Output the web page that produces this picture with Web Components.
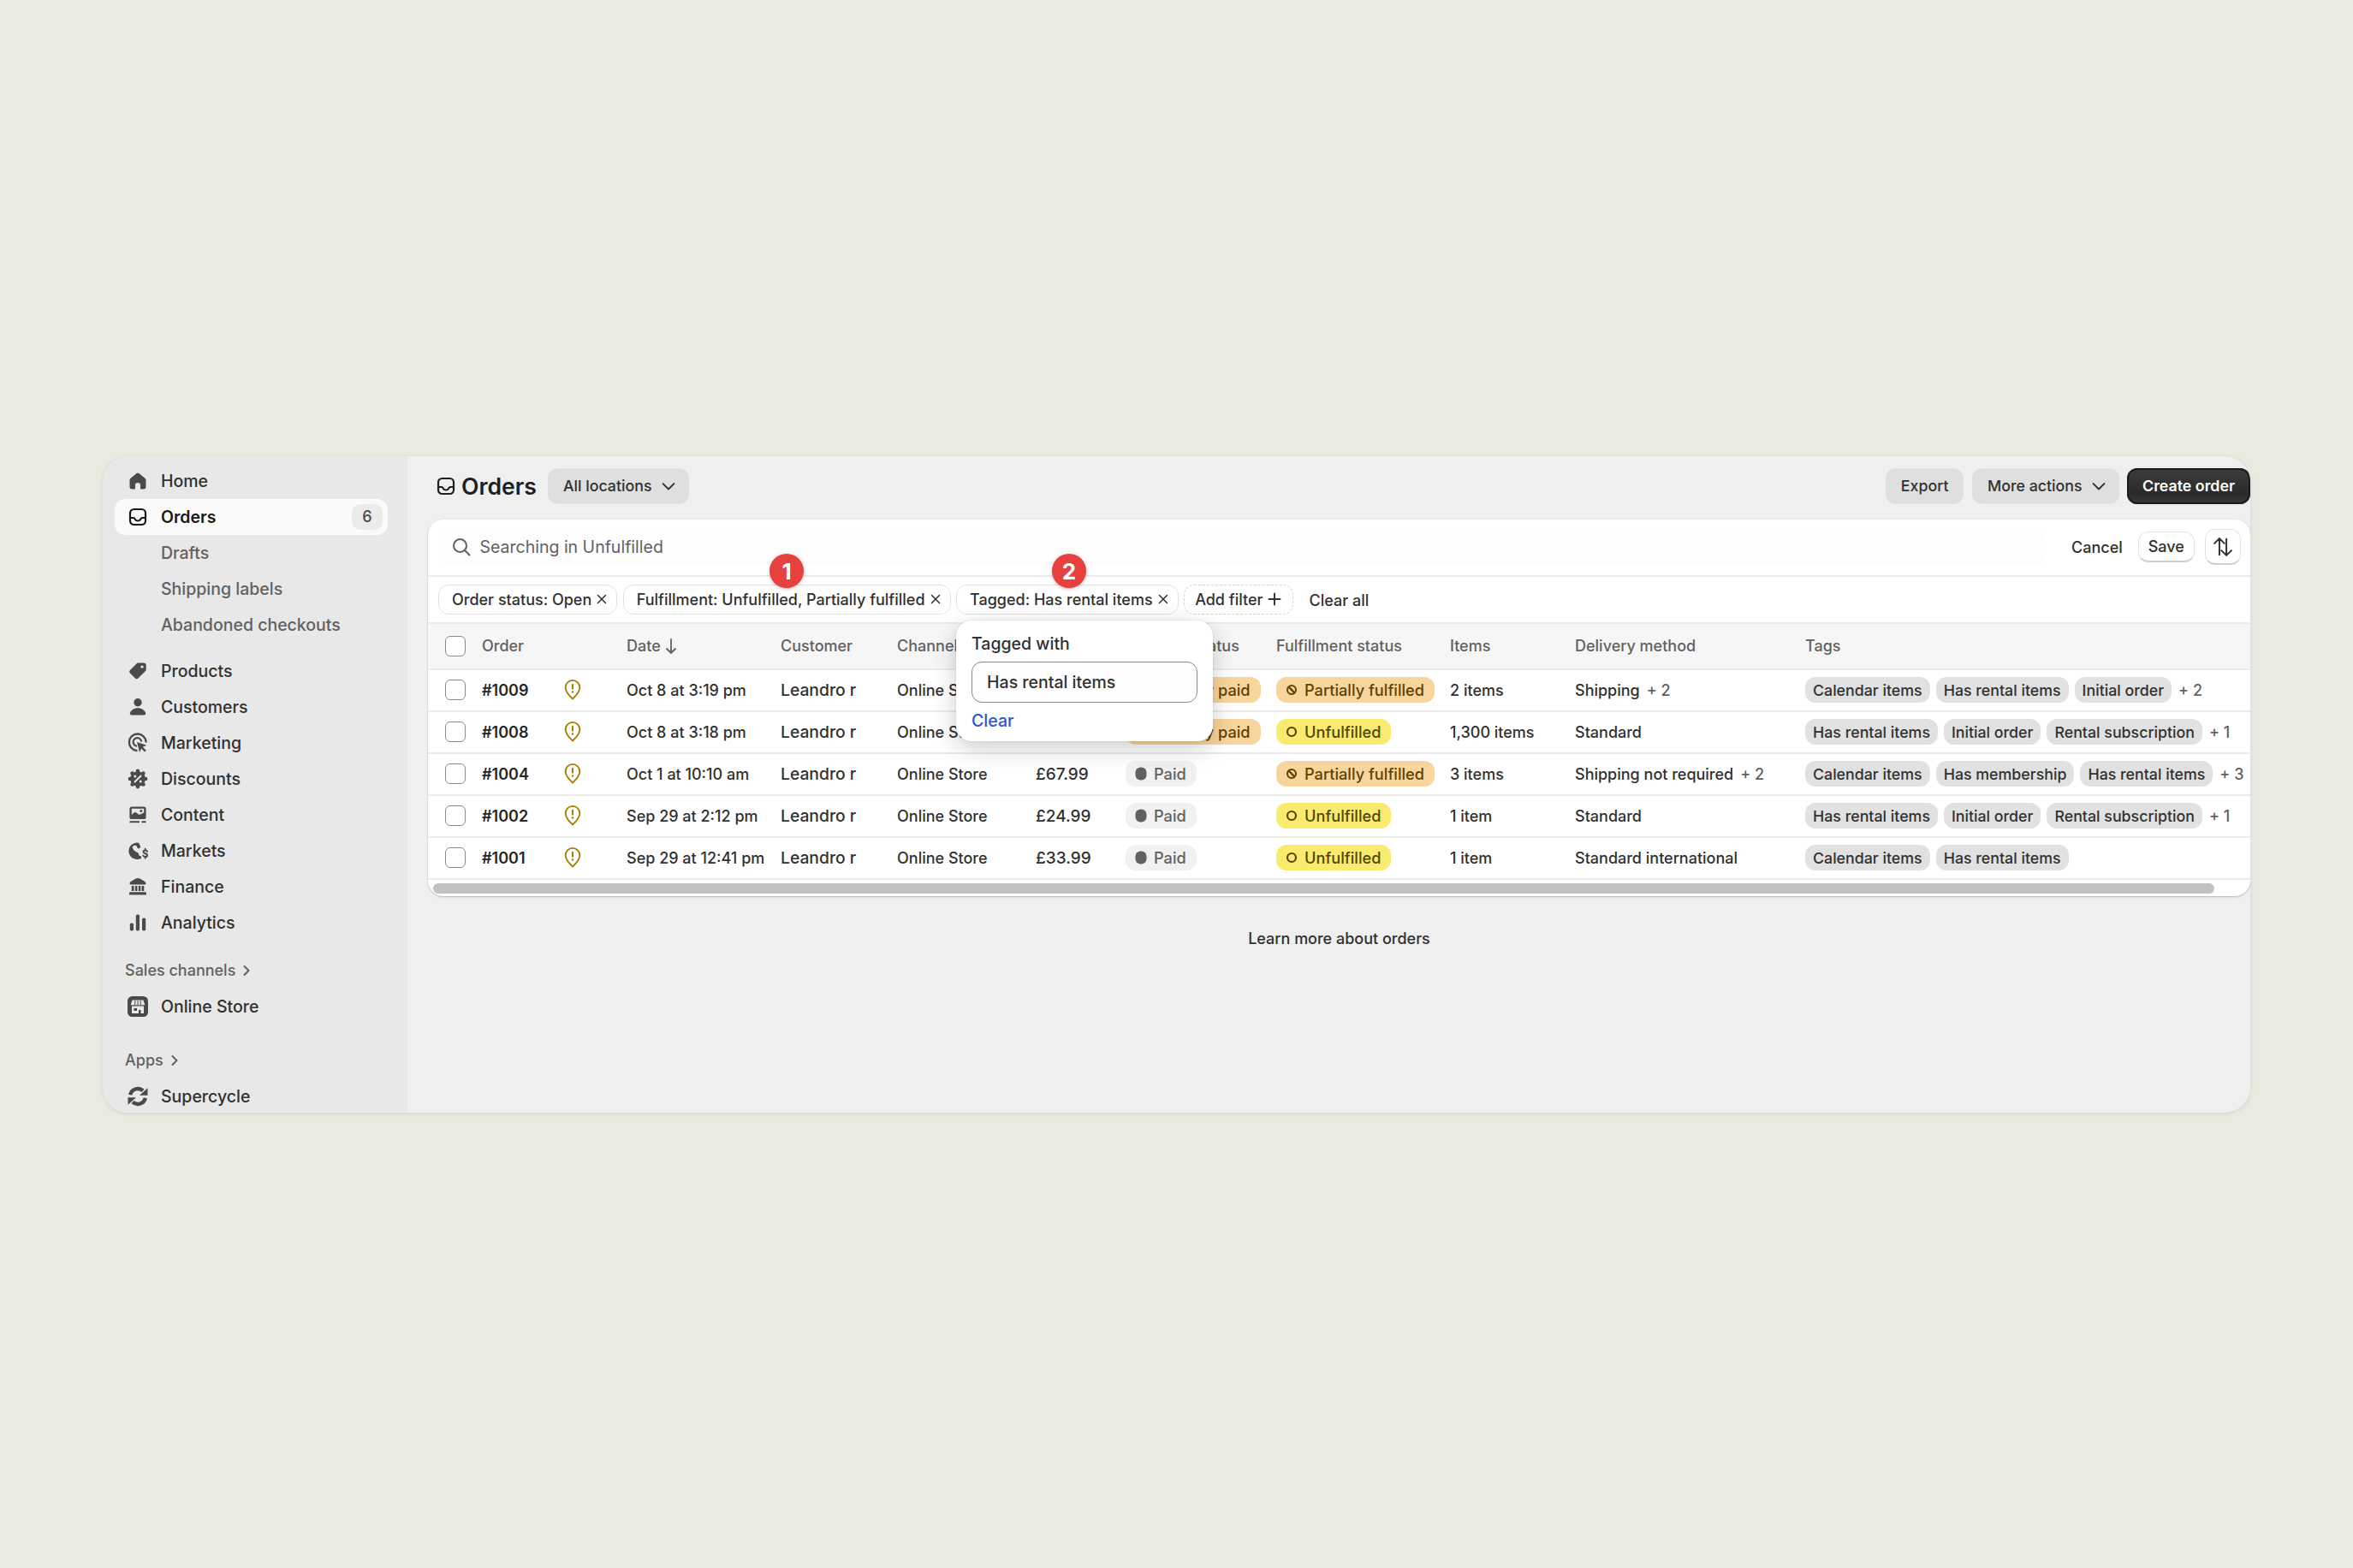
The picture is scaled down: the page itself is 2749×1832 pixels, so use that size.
<!DOCTYPE html>
<html lang="en">
<head>
<meta charset="utf-8">
<title>Orders</title>
<style>
  html, body { margin: 0; height: 100%; }
  body {
    background: #eaeae1;
    font-family: Inter, "Liberation Sans", sans-serif;
    font-size: 19.5px;
    color: #303030;
    display: flex;
    align-items: center;
    justify-content: center;
  }
</style>
</head>
<body>
<admin-window>
  <side-nav slot="nav">
    <nav-item icon="home">Home</nav-item>
    <nav-item icon="inbox" active count="6">Orders</nav-item>
    <nav-item sub>Drafts</nav-item>
    <nav-item sub>Shipping labels</nav-item>
    <nav-item sub>Abandoned checkouts</nav-item>
    <nav-item icon="tag" class="gap">Products</nav-item>
    <nav-item icon="person">Customers</nav-item>
    <nav-item icon="target">Marketing</nav-item>
    <nav-item icon="discount">Discounts</nav-item>
    <nav-item icon="content">Content</nav-item>
    <nav-item icon="globe">Markets</nav-item>
    <nav-item icon="bank">Finance</nav-item>
    <nav-item icon="bars">Analytics</nav-item>
    <nav-heading>Sales channels</nav-heading>
    <nav-item icon="store">Online Store</nav-item>
    <nav-heading class="apps">Apps</nav-heading>
    <nav-item icon="cycle">Supercycle</nav-item>
  </side-nav>

  <page-header>
    <ui-button slot="left" chevron>All locations</ui-button>
    <ui-button>Export</ui-button>
    <ui-button chevron>More actions</ui-button>
    <ui-button primary>Create order</ui-button>
  </page-header>

  <orders-card>
    <filter-pill slot="filters">Order status: Open</filter-pill>
    <filter-pill slot="filters">Fulfillment: Unfulfilled, Partially fulfilled<step-marker>1</step-marker></filter-pill>
    <filter-pill slot="filters">Tagged: Has rental items<step-marker style="margin-left:-18px">2</step-marker><tag-popover></tag-popover></filter-pill>
    <filter-pill slot="filters" add>Add filter</filter-pill>

    <order-row slot="rows" order="#1009" date="Oct 8 at 3:19 pm" channel="Online Store" total="£79.99" pay="partial" fulfil="partial" items="2 items" delivery="Shipping" extra="+ 2" more="+ 2">
      <tag-chip>Calendar items</tag-chip><tag-chip>Has rental items</tag-chip><tag-chip>Initial order</tag-chip>
    </order-row>
    <order-row slot="rows" order="#1008" date="Oct 8 at 3:18 pm" channel="Online Store" total="£59.99" pay="partial" fulfil="unfulfilled" items="1,300 items" delivery="Standard" more="+ 1">
      <tag-chip>Has rental items</tag-chip><tag-chip>Initial order</tag-chip><tag-chip>Rental subscription</tag-chip>
    </order-row>
    <order-row slot="rows" order="#1004" date="Oct 1 at 10:10 am" channel="Online Store" total="£67.99" pay="paid" fulfil="partial" items="3 items" delivery="Shipping not required" extra="+ 2" more="+ 3">
      <tag-chip>Calendar items</tag-chip><tag-chip>Has membership</tag-chip><tag-chip>Has rental items</tag-chip>
    </order-row>
    <order-row slot="rows" order="#1002" date="Sep 29 at 2:12 pm" channel="Online Store" total="£24.99" pay="paid" fulfil="unfulfilled" items="1 item" delivery="Standard" more="+ 1">
      <tag-chip>Has rental items</tag-chip><tag-chip>Initial order</tag-chip><tag-chip>Rental subscription</tag-chip>
    </order-row>
    <order-row slot="rows" order="#1001" date="Sep 29 at 12:41 pm" channel="Online Store" total="£33.99" pay="paid" fulfil="unfulfilled" items="1 item" delivery="Standard international">
      <tag-chip>Calendar items</tag-chip><tag-chip>Has rental items</tag-chip>
    </order-row>
  </orders-card>

  <div slot="foot">Learn more about orders</div>
</admin-window>

<script>
// icons are drawn 1 unit = 1px on a 24 box
const ICONS = {
  home: '<path fill="currentColor" d="M10.6 3a2.2 2.2 0 0 1 2.8 0l6.6 5.500c.9.7 1.500 1.800 1.500 3V19a2.300 2.300 0 0 1-2.300 2.400H16a1 1 0 0 1-1-1V17a3 3 0 0 0-6 0v3.400a1 1 0 0 1-1 1H4.800A2.300 2.300 0 0 1 2.500 19v-7.500c0-1.200.6-2.300 1.500-3z"/>',
  inbox: '<g fill="none" stroke="currentColor" stroke-width="2.200"><rect x="3" y="3" width="18" height="18" rx="4.500"/><path d="M3 13h4c1.200 0 1.300.8 1.800 1.700.6 1.100 1.600 1.800 3.200 1.800s2.600-.7 3.200-1.800c.5-.9.6-1.700 1.800-1.700h4"/></g>',
  tag: '<path fill="currentColor" fill-rule="evenodd" d="M14.300 2.500h4.700a2.700 2.700 0 0 1 2.700 2.700v4.700a3.400 3.400 0 0 1-1 2.400l-8 8a2.800 2.800 0 0 1-4 0l-5.500-5.500a2.800 2.800 0 0 1 0-4l8-8a3.400 3.400 0 0 1 2.100-.3zM17 5.400a1.700 1.700 0 1 0 0 3.400 1.700 1.700 0 0 0 0-3.400z"/>',
  person: '<g fill="currentColor"><circle cx="12" cy="6.800" r="4.700"/><path d="M12 13.200c-4.600 0-7.600 2.500-9 5.400-.7 1.500.3 2.900 1.900 2.900h14.200c1.600 0 2.600-1.400 1.900-2.900-1.400-2.900-4.400-5.400-9-5.400z"/></g>',
  target: '<g fill="none" stroke="currentColor" stroke-width="2.300" stroke-linecap="round"><path d="M21.500 10.500A9.800 9.800 0 1 0 10.500 21"/><path d="M16 9.500a4.800 4.800 0 1 0-6 6"/></g><path fill="currentColor" d="M11 11l11.300 3.800-4.500 2 4 4-1.700 1.700-4-4-2 4.500z"/>',
  discount: '<g fill="currentColor"><circle cx="12" cy="12" r="8.800"/><circle cx="12" cy="2.900" r="2.300"/><circle cx="12" cy="21.100" r="2.300"/><circle cx="2.900" cy="12" r="2.300"/><circle cx="21.100" cy="12" r="2.300"/><circle cx="5.600" cy="5.600" r="2.300"/><circle cx="18.400" cy="5.600" r="2.300"/><circle cx="5.600" cy="18.400" r="2.300"/><circle cx="18.400" cy="18.400" r="2.300"/></g><path stroke="#e8e8e8" stroke-width="1.900" stroke-linecap="round" d="M8.500 15.500l7-7"/><circle cx="8.800" cy="9" r="1.500" fill="#e8e8e8"/><circle cx="15.200" cy="15" r="1.500" fill="#e8e8e8"/>',
  content: '<path fill="currentColor" fill-rule="evenodd" d="M5 2.500h14a2.600 2.600 0 0 1 2.600 2.600v9.300A2.600 2.600 0 0 1 19 17H5a2.600 2.600 0 0 1-2.600-2.600V5.100A2.600 2.600 0 0 1 5 2.500zm-.2 2.200v7.800c1.500-1.800 3-3.400 4.400-3.400 1.600 0 2.400 2.600 4.400 2.600 1.800 0 3.300-1.300 5.600-2.500V4.700zm11 1.300a1.500 1.500 0 1 1 0 3 1.500 1.500 0 0 1 0-3z"/><path fill="currentColor" d="M2.500 19.200h11.500v2H2.500zM16.500 19.200h5v2h-5z"/>',
  globe: '<path fill="currentColor" d="M13 2.800A9.700 9.700 0 1 0 16 20.700v-2.300c-2.500-.2-3-1.300-3-2.600 0-1.700-1.800-1.700-3.500-2.800C7.600 11.700 6 10 5.600 7.500 7 5.800 8.800 5.300 10 6c1.500 1 .8 2.600 2.400 3.300 1.300.5 2.500-.6 2.600-1.800.1-1.500-1-2.700-2-4.700z"/><path fill="none" stroke="currentColor" stroke-width="1.900" stroke-linecap="round" d="M23 12.800c-.5-.9-1.300-1.300-2.300-1.300-1.300 0-2.200.7-2.200 1.800s.9 1.600 2.200 1.900c1.400.3 2.300.8 2.300 2s-1 1.900-2.300 1.900c-1.100 0-2-.5-2.400-1.400M20.700 9.800v1.700M20.700 18.800v2"/>',
  bank: '<path fill="currentColor" d="M12 2c1 0 2 .3 2.800.8l5 2.900c.9.500 1.700 1.500 1.700 2.500 0 .8-.6 1.300-1.300 1.300H3.800c-.7 0-1.300-.5-1.300-1.300 0-1 .8-2 1.700-2.500l5-2.900C10 2.300 11 2 12 2zM4.800 11h2.800v6H4.800zM8.900 11h2.500v6H8.900zM12.800 11h2.500v6h-2.500zM16.500 11h2.800v6h-2.800zM3.300 18.300h17.400a1.400 1.400 0 0 1 1.300 1.400v1.800H2v-1.800a1.400 1.400 0 0 1 1.300-1.400z"/>',
  bars: '<g fill="currentColor"><rect x="2.800" y="12.500" width="4.200" height="9" rx="1.700"/><rect x="9.800" y="2.500" width="4.200" height="19" rx="1.700"/><rect x="17" y="6.500" width="4.200" height="15" rx="1.700"/></g>',
  store: '<rect width="24" height="24" rx="5.500" fill="currentColor"/><path fill="#e8e8e8" d="M5.500 4.500h13l1.800 5.800H3.700z"/><path fill="#e8e8e8" d="M5 11.500h14v8.500h-3.500v-4h-2.500v4H5zM7.500 14v3h3.500v-3z" fill-rule="evenodd"/><path stroke="currentColor" stroke-width="1" d="M8.800 5v5M12 5v5M15.200 5v5"/>',
  cycle: '<g fill="none" stroke="currentColor" stroke-width="4.400"><path d="M3.200 10.200A9 9 0 0 1 18 5.300"/><path d="M20.800 13.800A9 9 0 0 1 6 18.700"/></g><path fill="currentColor" d="M14 10.800h9.500V2.200zM10 13.200H.5v8.600z"/>',
  chevron: '<path fill="none" stroke="currentColor" stroke-width="1.600" stroke-linecap="round" stroke-linejoin="round" d="M6.500 9.500L12 15l5.500-5.500"/>',
  right: '<path fill="none" stroke="currentColor" stroke-width="2" stroke-linecap="round" stroke-linejoin="round" d="M9.500 7l5 5-5 5"/>',
  search: '<g fill="none" stroke="currentColor" stroke-width="2" stroke-linecap="round"><circle cx="10.500" cy="10.500" r="7.500"/><path d="M16 16l5.500 5.500"/></g>',
  close: '<path fill="none" stroke="currentColor" stroke-width="1.500" stroke-linecap="round" d="M7.500 7.500l9 9M16.500 7.500l-9 9"/>',
  plus: '<path fill="none" stroke="currentColor" stroke-width="1.900" stroke-linecap="round" d="M12 5.500v13M5.500 12h13"/>',
  down: '<path fill="none" stroke="currentColor" stroke-width="1.800" stroke-linecap="round" stroke-linejoin="round" d="M12 4v16M7 15l5 5 5-5"/>',
  sort: '<path fill="none" stroke="currentColor" stroke-width="1.700" stroke-linecap="round" stroke-linejoin="round" d="M8.500 20V3.500M3.500 8.500l5-5 5 5M15.500 4v16.500M10.500 15.500l5 5 5-5" />',
  alert: '<g fill="none" stroke="currentColor"><path stroke-width="1.700" d="M12 1.800a7.700 7.700 0 0 1 7.700 7.800c0 4-3.700 8.300-7.700 12.100C8 17.900 4.300 13.600 4.300 9.600A7.700 7.700 0 0 1 12 1.800z"/><path stroke-width="1.900" stroke-linecap="round" d="M12 6.300v4.600"/></g><circle cx="12" cy="14.300" r="1.150" fill="currentColor"/>',
  ring: '<circle cx="12" cy="12" r="5" fill="none" stroke="currentColor" stroke-width="2.200"/>',
  stripes: '<circle cx="12" cy="12" r="5" fill="none" stroke="currentColor" stroke-width="2"/><path stroke="currentColor" stroke-width="2.200" d="M8.400 8.400l7.200 7.200"/>',
  dot: '<rect x="5.500" y="4.500" width="13" height="15" rx="6" fill="currentColor"/>'
};

function iconSvg(name, size) {
  return `<svg width="${size}" height="${size}" viewBox="0 0 24 24" aria-hidden="true" style="display:block;flex:none">${ICONS[name]}</svg>`;
}

class AdminWindow extends HTMLElement {
  connectedCallback() {
    this.attachShadow({ mode: 'open' }).innerHTML = `
      <style>
        :host {
          display: flex;
          width: 2509px;
          height: 767px;
          border-radius: 30px;
          overflow: hidden;
          background: #efefef;
          box-shadow: 0 1px 4px rgba(60, 60, 40, 0.14);
        }
        nav { width: 356px; flex: none; background: #e8e8e8; overflow: hidden; }
        main { flex: 1; min-width: 0; padding-top: 14px; display: flex; flex-direction: column; }
        .foot { margin-left: 24px; text-align: center; font-weight: 500; font-size: 18px; padding-top: 39px; color: #303030; }
      </style>
      <nav><slot name="nav"></slot></nav>
      <main>
        <slot></slot>
        <div class="foot"><slot name="foot"></slot></div>
      </main>`;
  }
}

class SideNav extends HTMLElement {
  connectedCallback() {
    this.attachShadow({ mode: 'open' }).innerHTML = `
      <style>
        :host { display: flex; flex-direction: column; padding: 8px 23px 0 14px; }
        ::slotted(.gap) { margin-top: 12px; }
        ::slotted(.apps) { margin-top: 21px; }
      </style>
      <slot></slot>`;
  }
}

class NavItem extends HTMLElement {
  connectedCallback() {
    const icon = this.getAttribute('icon');
    const count = this.getAttribute('count');
    this.attachShadow({ mode: 'open' }).innerHTML = `
      <style>
        :host {
          display: flex;
          flex: none;
          align-items: center;
          height: 42px;
          border-radius: 12px;
          font-size: 19.5px;
          font-weight: 500;
          color: #303030;
          padding-left: 54px;
          padding-right: 6px;
          position: relative;
        }
        :host([active]) { background: #fafafa; font-weight: 600; color: #1a1a1a; }
        :host([sub]) { font-weight: 450; color: #616161; }
        .ico { position: absolute; left: 15px; top: 9px; color: #4a4a4a; }
        :host([active]) .ico { color: #1a1a1a; }
        .count {
          margin-left: auto;
          min-width: 36px;
          height: 30px;
          border-radius: 10px;
          background: #ebebeb;
          color: #4a4a4a;
          font-size: 18px;
          font-weight: 450;
          display: flex;
          align-items: center;
          justify-content: center;
        }
      </style>
      ${icon ? `<span class="ico">${iconSvg(icon, 24)}</span>` : ''}
      <slot></slot>
      ${count ? `<span class="count">${count}</span>` : ''}`;
  }
}

class NavHeading extends HTMLElement {
  connectedCallback() {
    this.attachShadow({ mode: 'open' }).innerHTML = `
      <style>
        :host {
          display: flex;
          align-items: center;
          gap: 1px;
          height: 42px;
          margin-top: 14px;
          padding-left: 12px;
          font-size: 18px;
          font-weight: 450;
          color: #616161;
        }
      </style>
      <slot></slot>${iconSvg('right', 24)}`;
  }
}

class PageHeader extends HTMLElement {
  connectedCallback() {
    this.attachShadow({ mode: 'open' }).innerHTML = `
      <style>
        :host { display: flex; align-items: center; height: 42px; margin-bottom: 18px; padding-left: 33px; gap: 9px; }
        h1 { margin: 0; display: flex; align-items: center; gap: 6px; font-size: 26.6px; font-weight: 600; color: #1f1f1f; }
        .right { margin-left: auto; display: flex; gap: 9.5px; }
        .left { margin-left: 4px; }
      </style>
      <h1>${iconSvg('inbox', 24)}Orders</h1>
      <div class="left"><slot name="left"></slot></div>
      <div class="right"><slot></slot></div>`;
  }
}

class UiButton extends HTMLElement {
  connectedCallback() {
    const chevron = this.hasAttribute('chevron');
    this.attachShadow({ mode: 'open' }).innerHTML = `
      <style>
        :host {
          display: inline-flex;
          align-items: center;
          gap: 5px;
          height: 42px;
          box-sizing: border-box;
          padding: 0 ${chevron ? 10 : 18}px 0 18px;
          border-radius: 12px;
          background: #dfdfdf;
          font-size: 17.8px;
          font-weight: 500;
          color: #303030;
        }
        :host([primary]) {
          background: linear-gradient(#3d3d3d, #2a2a2a 70%, #3a3a3a);
          box-shadow: inset 0 0 0 2px #1c1c1c;
          color: #fff;
          font-weight: 600;
        }
      </style>
      <slot></slot>${chevron ? iconSvg('chevron', 28) : ''}`;
  }
}

class OrdersCard extends HTMLElement {
  connectedCallback() {
    this.attachShadow({ mode: 'open' }).innerHTML = `
      <style>
        :host {
          display: block;
          margin-left: 24px;
          height: 440px;
          box-sizing: border-box;
          background: #fff;
          border-radius: 18px;
          box-shadow: 0 1px 2px rgba(0, 0, 0, 0.22), 0 0 0 1px rgba(0, 0, 0, 0.02);
          position: relative;
        }
        .search {
          height: 67px;
          box-sizing: border-box;
          border-bottom: 2px solid #ebebeb;
          display: flex;
          align-items: center;
          padding-left: 12px;
        }
        .field {
          width: 1878px;
          height: 43px;
          flex: none;
          border-radius: 12px;
          background: #fdfdfd;
          display: flex;
          align-items: center;
          gap: 9.5px;
          padding-left: 15px;
          box-sizing: border-box;
          color: #616161;
          font-size: 19.5px;
        }
        .cancel { margin-left: 30px; font-size: 18px; font-weight: 500; }
        .save {
          margin-left: 18px;
          width: 66px;
          height: 36px;
          box-sizing: border-box;
          border-radius: 12px;
          border: 1px solid #e3e3e3;
          border-bottom: 2px solid #cfcfcf;
          display: flex;
          align-items: center;
          justify-content: center;
          font-size: 18px;
          font-weight: 500;
        }
        .sort {
          margin-left: 12px;
          width: 42px;
          height: 42px;
          box-sizing: border-box;
          border-radius: 12px;
          border: 1px solid #e3e3e3;
          border-bottom: 2px solid #cfcfcf;
          display: flex;
          align-items: center;
          justify-content: center;
        }
        .filters {
          height: 55px;
          box-sizing: border-box;
          border-bottom: 2px solid #ebebeb;
          display: flex;
          align-items: flex-start;
          gap: 6.5px;
          padding: 9px 0 0 12px;
        }
        .clear { margin-left: 12px; font-size: 18px; font-weight: 450; line-height: 37px; }
        .head {
          display: grid;
          grid-template-columns: 43px 95px 74px 180px 136px 162px 105px 176px 203px 146px 269px 1fr;
          align-items: center;
          height: 54px;
          box-sizing: border-box;
          padding-left: 20px;
          background: #f6f6f6;
          border-bottom: 2px solid #ebebeb;
          font-size: 18px;
          font-weight: 500;
          color: #616161;
        }
        .head span { white-space: nowrap; display: flex; align-items: center; }
        .box {
          width: 24px;
          height: 24px;
          box-sizing: border-box;
          border: 1.5px solid #8a8a8a;
          border-radius: 6px;
          background: #fff;
        }
        .rows { display: block; overflow: hidden; }
        .track { height: 19px; padding: 4px 42px 3px 6px; box-sizing: border-box; }
        .thumb { height: 12px; border-radius: 6px; background: #c1c1c1; }
      </style>
      <div class="search">
        <div class="field">${iconSvg('search', 24)}Searching in Unfulfilled</div>
        <span class="cancel">Cancel</span>
        <span class="save">Save</span>
        <span class="sort">${iconSvg('sort', 28)}</span>
      </div>
      <div class="filters">
        <slot name="filters"></slot>
        <span class="clear">Clear all</span>
      </div>
      <div class="head">
        <div class="box"></div>
        <span>Order</span><span></span>
        <span>Date ${iconSvg('down', 24)}</span>
        <span>Customer</span><span>Channel</span><span>Total</span>
        <span>Payment status</span><span>Fulfillment status</span>
        <span>Items</span><span>Delivery method</span><span>Tags</span>
      </div>
      <div class="rows"><slot name="rows"></slot></div>
      <div class="track"><div class="thumb"></div></div>`;
  }
}

class FilterPill extends HTMLElement {
  connectedCallback() {
    const add = this.hasAttribute('add');
    this.attachShadow({ mode: 'open' }).innerHTML = `
      <style>
        :host {
          display: inline-flex;
          align-items: center;
          gap: 0;
          height: 35px;
          box-sizing: border-box;
          padding: 0 5px 0 15px;
          border: 1.5px solid #e3e3e3;
          border-radius: 12px;
          background: #fff;
          font-size: 18px;
          font-weight: 450;
          color: #303030;
          white-space: nowrap;
          position: relative;
        }
        :host([add]) { border: 1.5px dashed #d4d4d4; padding: 0 9px 0 12px; gap: 1.5px; }
      </style>
      <slot></slot>${iconSvg(add ? 'plus' : 'close', 24)}`;
  }
}

class StepMarker extends HTMLElement {
  connectedCallback() {
    this.attachShadow({ mode: 'open' }).innerHTML = `
      <style>
        :host {
          position: absolute;
          left: 50%;
          top: -36.500px;
          width: 40px;
          height: 40px;
          margin-left: -20px;
          border-radius: 50%;
          background: #e8403e;
          color: #fff;
          font-size: 26px;
          font-weight: 700;
          display: flex;
          align-items: center;
          justify-content: center;
          box-shadow: 0 1px 4px rgba(0, 0, 0, 0.25);
          z-index: 3;
        }
      </style>
      <slot></slot>`;
  }
}

class TagPopover extends HTMLElement {
  connectedCallback() {
    this.attachShadow({ mode: 'open' }).innerHTML = `
      <style>
        :host {
          position: absolute;
          left: -1px;
          top: 41px;
          width: 300px;
          height: 141px;
          box-sizing: border-box;
          padding: 15px 18px 0;
          background: #fff;
          border-radius: 18px;
          box-shadow: 0 8px 28px rgba(0, 0, 0, 0.2), 0 0 2px rgba(0, 0, 0, 0.15);
          z-index: 2;
          font-size: 19.5px;
          font-weight: 450;
        }
        .label { line-height: 24px; }
        .input {
          margin-top: 9px;
          height: 48px;
          box-sizing: border-box;
          border: 1.5px solid #8a8a8a;
          border-radius: 12px;
          background: #fdfdfd;
          display: flex;
          align-items: center;
          padding-left: 17px;
        }
        .clear { margin-top: 9px; color: #2f52d6; line-height: 24px; }
      </style>
      <div class="label">Tagged with</div>
      <div class="input">Has rental items</div>
      <div class="clear">Clear</div>`;
  }
}

class StatusBadge extends HTMLElement {
  connectedCallback() {
    const kind = this.getAttribute('kind');
    const icon = { paid: 'dot', partial: 'stripes', pay: 'dot', unfulfilled: 'ring' }[kind];
    this.attachShadow({ mode: 'open' }).innerHTML = `
      <style>
        :host {
          display: inline-flex;
          align-items: center;
          height: 30px;
          padding: 0 12px 0 6px;
          gap: 3px;
          border-radius: 12px;
          font-size: 18.2px;
          font-weight: 450;
          white-space: nowrap;
        }
        :host([kind=paid]) { background: #f1f1f1; color: #616161; }
        :host([kind=partial]), :host([kind=pay]) { background: #f8d59c; color: #5e4200; }
        :host([kind=unfulfilled]) { background: #faeb6f; color: #4f4700; }
      </style>
      ${iconSvg(icon, 24)}<slot></slot>`;
  }
}

class TagChip extends HTMLElement {
  connectedCallback() {
    this.attachShadow({ mode: 'open' }).innerHTML = `
      <style>
        :host {
          display: inline-flex;
          align-items: center;
          height: 30px;
          padding: 0 9px;
          border-radius: 12px;
          background: #e1e1e1;
          font-size: 17.8px;
          font-weight: 450;
          color: #303030;
          white-space: nowrap;
        }
      </style>
      <slot></slot>`;
  }
}

class OrderRow extends HTMLElement {
  connectedCallback() {
    const a = (n) => this.getAttribute(n) || '';
    const payLabel = a('pay') === 'paid' ? 'Paid' : 'Partially paid';
    const fulfilLabel = a('fulfil') === 'partial' ? 'Partially fulfilled' : 'Unfulfilled';
    this.attachShadow({ mode: 'open' }).innerHTML = `
      <style>
        :host {
          display: grid;
          grid-template-columns: 43px 95px 74px 180px 136px 162px 105px 176px 203px 146px 269px 1fr;
          align-items: center;
          height: 49px;
          box-sizing: border-box;
          padding-left: 20px;
          border-bottom: 2px solid #ebebeb;
          background: #fff;
          font-size: 18px;
          font-weight: 450;
          color: #303030;
          white-space: nowrap;
        }
        .box {
          width: 24px;
          height: 24px;
          box-sizing: border-box;
          border: 1.5px solid #8a8a8a;
          border-radius: 6px;
        }
        .order { font-weight: 600; color: #262626; }
        .alert { color: #a87e00; margin-left: -2px; }
        .cust { font-size: 19.3px; }
        .total { font-size: 19px; }
        .extra { color: #616161; margin-left: 8px; }
        .tags { display: flex; align-items: center; gap: 7px; }
        .more { color: #616161; margin-left: 1px; }
      </style>
      <div class="box"></div>
      <span class="order">${a('order')}</span>
      <span class="alert">${iconSvg('alert', 26)}</span>
      <span>${a('date')}</span>
      <span class="cust">Leandro r</span>
      <span>${a('channel')}</span>
      <span class="total">${a('total')}</span>
      <div><status-badge kind="${a('pay') === 'paid' ? 'paid' : 'pay'}">${payLabel}</status-badge></div>
      <div><status-badge kind="${a('fulfil')}">${fulfilLabel}</status-badge></div>
      <span>${a('items')}</span>
      <span>${a('delivery')}${a('extra') ? `<span class="extra">${a('extra')}</span>` : ''}</span>
      <div class="tags"><slot></slot>${a('more') ? `<span class="more">${a('more')}</span>` : ''}</div>`;
  }
}

customElements.define('admin-window', AdminWindow);
customElements.define('side-nav', SideNav);
customElements.define('nav-item', NavItem);
customElements.define('nav-heading', NavHeading);
customElements.define('page-header', PageHeader);
customElements.define('ui-button', UiButton);
customElements.define('orders-card', OrdersCard);
customElements.define('filter-pill', FilterPill);
customElements.define('step-marker', StepMarker);
customElements.define('tag-popover', TagPopover);
customElements.define('status-badge', StatusBadge);
customElements.define('tag-chip', TagChip);
customElements.define('order-row', OrderRow);
</script>
</body>
</html>
